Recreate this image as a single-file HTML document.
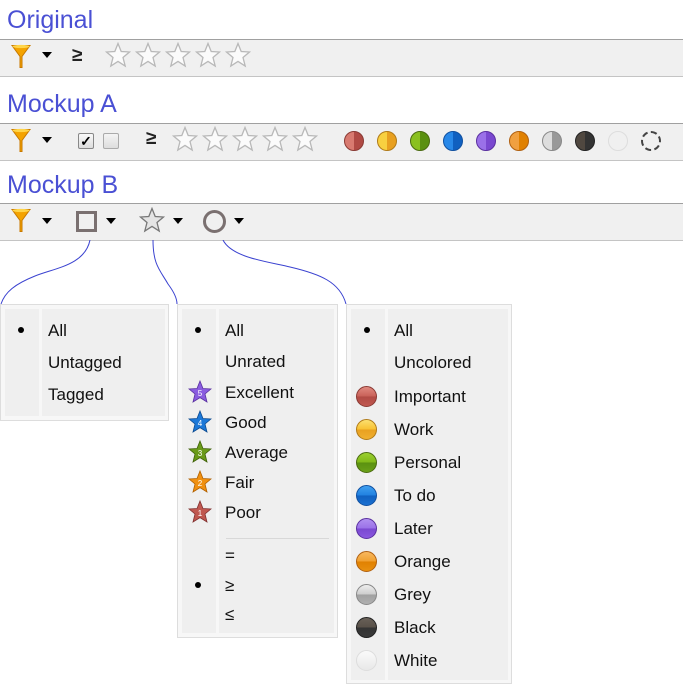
<!DOCTYPE html>
<html><head><meta charset="utf-8"><style>
*{margin:0;padding:0;box-sizing:border-box}
body{width:683px;height:683px;background:#fff;position:relative;overflow:hidden;font-family:"Liberation Sans",sans-serif}
.t{position:absolute;left:7px;font-size:25px;color:#4a50d4}
.bar{position:absolute;left:0;width:683px;height:38px;background:#f0f0f0;border-top:1px solid #a0a0a0;border-bottom:1px solid #c4c4c4}
.a{position:absolute}
.menu{position:absolute;background:#f7f7f7;border:1px solid #ddd}
.col{position:absolute;background:#efefef}
.it{position:absolute;font-size:17px;color:#111;line-height:20px}
.dot{position:absolute;width:6px;height:6px;border-radius:50%;background:#000}
.ball{position:absolute;width:21px;height:21px;border-radius:50%}
.sb{position:absolute;width:20px;height:20px;border-radius:50%}
</style></head><body>
<svg width="0" height="0" style="position:absolute"><defs>
<symbol id="funnel" viewBox="0 0 20 26"><path d="M1 2 H19 L11 13 V24 H9 V13 Z" fill="#f4a300" stroke="#c77800" stroke-width="1"/><ellipse cx="10" cy="3" rx="8.5" ry="1.6" fill="#ffd54a"/></symbol>
<symbol id="star" viewBox="0 0 26 26"><polygon points="13,1.5 16.2,9.5 24.5,10 18,15.5 20.2,24 13,19.4 5.8,24 8,15.5 1.5,10 9.8,9.5" fill="#fbfbfb" stroke="#b8b8b8" stroke-width="1.3"/></symbol>
<symbol id="tri" viewBox="0 0 10 6"><polygon points="0,0 10,0 5,6" fill="#000"/></symbol>
</defs></svg>

<div class="t" style="top:6px">Original</div>
<div class="bar" style="top:39px"></div>
<div class="t" style="top:90px">Mockup A</div>
<div class="bar" style="top:123px"></div>
<div class="t" style="top:171px">Mockup B</div>
<div class="bar" style="top:203px"></div>

<svg class="a" style="left:11px;top:43px" width="20" height="27"><use href="#funnel"/></svg>
<svg class="a" style="left:42px;top:52px" width="10" height="6"><use href="#tri"/></svg>
<div class="a" style="left:72px;top:45px;font-size:19px;font-weight:bold;color:#222">≥</div>
<svg class="a" style="left:105px;top:42px" width="26" height="26"><use href="#star"/></svg>
<svg class="a" style="left:135px;top:42px" width="26" height="26"><use href="#star"/></svg>
<svg class="a" style="left:165px;top:42px" width="26" height="26"><use href="#star"/></svg>
<svg class="a" style="left:195px;top:42px" width="26" height="26"><use href="#star"/></svg>
<svg class="a" style="left:225px;top:42px" width="26" height="26"><use href="#star"/></svg>

<svg class="a" style="left:11px;top:127px" width="20" height="27"><use href="#funnel"/></svg>
<svg class="a" style="left:42px;top:137px" width="10" height="6"><use href="#tri"/></svg>
<div class="a" style="left:78px;top:133px;width:16px;height:16px;border:1px solid #888;border-radius:2px;background:linear-gradient(#fafafa,#ddd);font-size:14px;line-height:14px;text-align:center;font-weight:bold">✓</div>
<div class="a" style="left:103px;top:133px;width:16px;height:16px;border:1px solid #aaa;border-radius:2px;background:linear-gradient(#f4f4f4,#ddd)"></div>
<div class="a" style="left:146px;top:128px;font-size:19px;font-weight:bold;color:#222">≥</div>
<svg class="a" style="left:172px;top:126px" width="26" height="26"><use href="#star"/></svg>
<svg class="a" style="left:202px;top:126px" width="26" height="26"><use href="#star"/></svg>
<svg class="a" style="left:232px;top:126px" width="26" height="26"><use href="#star"/></svg>
<svg class="a" style="left:262px;top:126px" width="26" height="26"><use href="#star"/></svg>
<svg class="a" style="left:292px;top:126px" width="26" height="26"><use href="#star"/></svg>
<div class="sb" style="left:344px;top:131px;background:linear-gradient(90deg,#d87a70 50%,#b04a44 50%);border:1px solid #8a3a34"></div>
<div class="sb" style="left:377px;top:131px;background:linear-gradient(90deg,#f8d040 50%,#e8a020 50%);border:1px solid #b07a18"></div>
<div class="sb" style="left:410px;top:131px;background:linear-gradient(90deg,#8ac020 50%,#5a9010 50%);border:1px solid #4a6a10"></div>
<div class="sb" style="left:443px;top:131px;background:linear-gradient(90deg,#2888e8 50%,#1060c0 50%);border:1px solid #1050a0"></div>
<div class="sb" style="left:476px;top:131px;background:linear-gradient(90deg,#9a70e8 50%,#7a48d0 50%);border:1px solid #5a30a0"></div>
<div class="sb" style="left:509px;top:131px;background:linear-gradient(90deg,#f0a040 50%,#e08000 50%);border:1px solid #b06010"></div>
<div class="sb" style="left:542px;top:131px;background:linear-gradient(90deg,#ddd 50%,#999 50%);border:1px solid #888"></div>
<div class="sb" style="left:575px;top:131px;background:linear-gradient(90deg,#504840 50%,#333 50%);border:1px solid #222"></div>
<div class="sb" style="left:608px;top:131px;background:#f0f0f0;border:1px solid #ddd"></div>
<div class="sb" style="left:641px;top:131px;border:2px dashed #444"></div>

<svg class="a" style="left:11px;top:207px" width="20" height="27"><use href="#funnel"/></svg>
<svg class="a" style="left:42px;top:218px" width="10" height="6"><use href="#tri"/></svg>
<div class="a" style="left:76px;top:211px;width:21px;height:21px;border:3px solid #7a7070"></div>
<svg class="a" style="left:106px;top:218px" width="10" height="6"><use href="#tri"/></svg>
<svg class="a" style="left:139px;top:207px" width="26" height="26"><polygon points="13,1.5 16.2,9.5 24.5,10 18,15.5 20.2,24 13,19.4 5.8,24 8,15.5 1.5,10 9.8,9.5" fill="#e4e4e4" stroke="#777" stroke-width="1.3"/></svg>
<svg class="a" style="left:173px;top:218px" width="10" height="6"><use href="#tri"/></svg>
<div class="a" style="left:203px;top:210px;width:23px;height:23px;border:3px solid #7a7070;border-radius:50%"></div>
<svg class="a" style="left:234px;top:218px" width="10" height="6"><use href="#tri"/></svg>

<svg class="a" style="left:0;top:240px" width="360" height="66"><g fill="none" stroke="#3a42d0" stroke-width="1">
<path d="M90 0 C85 25 55 28 35 36 C15 44 5 52 1 64"/>
<path d="M153 0 C153 25 160 30 168 44 C174 52 177 58 177 64"/>
<path d="M223 0 C232 18 270 22 290 27 C320 34 340 42 346 64"/></g></svg>

<div class="menu" style="left:0;top:304px;width:169px;height:117px">
<div class="col" style="left:4px;top:4px;width:34px;height:107px"></div>
<div class="col" style="left:41px;top:4px;width:123px;height:107px"></div>
</div>
<div class="dot" style="left:18px;top:327px"></div>
<div class="it" style="left:48px;top:321px">All</div>
<div class="it" style="left:48px;top:353px">Untagged</div>
<div class="it" style="left:48px;top:385px">Tagged</div>

<div class="menu" style="left:177px;top:304px;width:161px;height:334px">
<div class="col" style="left:4px;top:4px;width:34px;height:324px"></div>
<div class="col" style="left:41px;top:4px;width:115px;height:324px"></div>
<div class="a" style="left:48px;top:233px;width:103px;height:1px;background:#d8d8d8"></div>
</div>
<div class="dot" style="left:195px;top:327px"></div>
<div class="it" style="left:225px;top:321px">All</div>
<div class="it" style="left:225px;top:352px">Unrated</div>
<div class="it" style="left:225px;top:383px">Excellent</div>
<div class="it" style="left:225px;top:413px">Good</div>
<div class="it" style="left:225px;top:443px">Average</div>
<div class="it" style="left:225px;top:473px">Fair</div>
<div class="it" style="left:225px;top:503px">Poor</div>
<div class="it" style="left:225px;top:546px">=</div>
<div class="dot" style="left:195px;top:582px"></div>
<div class="it" style="left:225px;top:576px">≥</div>
<div class="it" style="left:225px;top:605px">≤</div>
<svg class="a" style="left:188px;top:380px" width="24" height="145" viewBox="0 0 24 145">
<g stroke-width="0.8" font-size="8" font-family="Liberation Sans">
<g transform="translate(0,0)"><polygon points="12,1 15,8.5 23,9 17,14 19,22 12,17.6 5,22 7,14 1,9 9,8.5" fill="#8a5ce0" stroke="#5a30a0"/><text x="12" y="16" text-anchor="middle" fill="#fff">5</text></g>
<g transform="translate(0,30)"><polygon points="12,1 15,8.5 23,9 17,14 19,22 12,17.6 5,22 7,14 1,9 9,8.5" fill="#1c78d8" stroke="#0c4a90"/><text x="12" y="16" text-anchor="middle" fill="#fff">4</text></g>
<g transform="translate(0,60)"><polygon points="12,1 15,8.5 23,9 17,14 19,22 12,17.6 5,22 7,14 1,9 9,8.5" fill="#6a9a18" stroke="#3e6008"/><text x="12" y="16" text-anchor="middle" fill="#fff">3</text></g>
<g transform="translate(0,90)"><polygon points="12,1 15,8.5 23,9 17,14 19,22 12,17.6 5,22 7,14 1,9 9,8.5" fill="#f09010" stroke="#b06000"/><text x="12" y="16" text-anchor="middle" fill="#fff">2</text></g>
<g transform="translate(0,120)"><polygon points="12,1 15,8.5 23,9 17,14 19,22 12,17.6 5,22 7,14 1,9 9,8.5" fill="#c05850" stroke="#803030"/><text x="12" y="16" text-anchor="middle" fill="#fff">1</text></g>
</g></svg>

<div class="menu" style="left:346px;top:304px;width:166px;height:380px">
<div class="col" style="left:4px;top:4px;width:34px;height:371px"></div>
<div class="col" style="left:41px;top:4px;width:120px;height:371px"></div>
</div>
<div class="dot" style="left:364px;top:327px"></div>
<div class="it" style="left:394px;top:321px">All</div>
<div class="it" style="left:394px;top:353px">Uncolored</div>
<div class="it" style="left:394px;top:387px">Important</div>
<div class="it" style="left:394px;top:420px">Work</div>
<div class="it" style="left:394px;top:453px">Personal</div>
<div class="it" style="left:394px;top:486px">To do</div>
<div class="it" style="left:394px;top:519px">Later</div>
<div class="it" style="left:394px;top:552px">Orange</div>
<div class="it" style="left:394px;top:585px">Grey</div>
<div class="it" style="left:394px;top:618px">Black</div>
<div class="it" style="left:394px;top:651px">White</div>
<div class="ball" style="left:356px;top:386px;background:linear-gradient(#e08a80,#c86058 50%,#b04a44 50%,#c05850);border:1px solid #8a3a34"></div>
<div class="ball" style="left:356px;top:419px;background:linear-gradient(#fbe070,#f8c030 50%,#e8a020 50%,#f0b030);border:1px solid #b07a18"></div>
<div class="ball" style="left:356px;top:452px;background:linear-gradient(#9ad030,#80b818 50%,#5a9010 50%,#6aa018);border:1px solid #4a6a10"></div>
<div class="ball" style="left:356px;top:485px;background:linear-gradient(#40a0f0,#2080e0 50%,#1060c0 50%,#1a70d0);border:1px solid #1050a0"></div>
<div class="ball" style="left:356px;top:518px;background:linear-gradient(#b090f0,#9a70e8 50%,#7a48d0 50%,#8a58e0);border:1px solid #5a30a0"></div>
<div class="ball" style="left:356px;top:551px;background:linear-gradient(#f8b860,#f0a030 50%,#e08000 50%,#e89010);border:1px solid #b06010"></div>
<div class="ball" style="left:356px;top:584px;background:linear-gradient(#eee,#ccc 50%,#a0a0a0 50%,#b0b0b0);border:1px solid #888"></div>
<div class="ball" style="left:356px;top:617px;background:linear-gradient(#686058,#585048 50%,#333 50%,#3a3a3a);border:1px solid #222"></div>
<div class="ball" style="left:356px;top:650px;background:linear-gradient(#fafafa,#e8e8e8);border:1px solid #ddd"></div>
</body></html>
